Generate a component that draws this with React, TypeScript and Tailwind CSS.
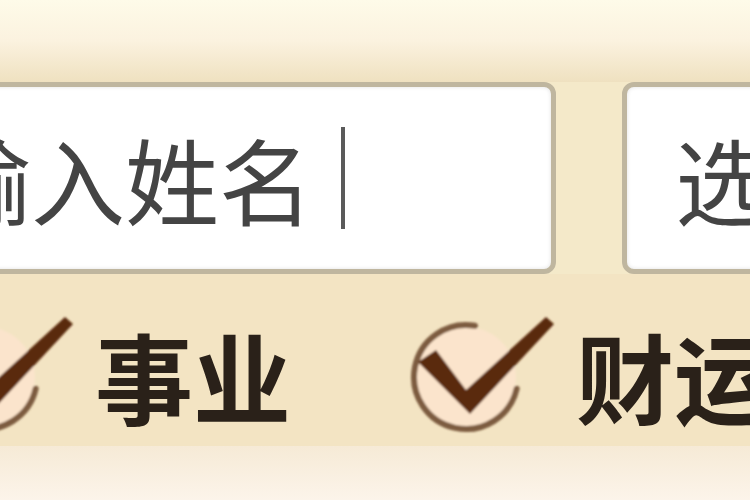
import React from "react";

const cjk = { fontFamily: '"Noto Sans CJK SC", "Noto Sans", sans-serif' };

// 圆圈对勾，右上角留缺口让勾穿出
const CheckCircle: React.FC = () => (
  <svg width="150" height="120" viewBox="0 0 150 120" className="shrink-0">
    <defs>
      <filter id="soft" x="-20%" y="-20%" width="140%" height="140%">
        <feGaussianBlur stdDeviation="1.2" />
      </filter>
    </defs>
    <g filter="url(#soft)">
      <circle cx="60" cy="63" r="50" fill="#fbe4cc" />
      <path
        d="M110.7 74.7 A52 52 0 1 1 69 11.8"
        fill="none"
        stroke="#7d5b3f"
        strokeWidth="6"
        strokeLinecap="round"
      />
      <path
        d="M12 48 L30 36 L60 76 L140 3 L148 10 L64 100 Z"
        fill="#5a2a10"
      />
    </g>
  </svg>
);

const options = ["事业", "财运"];

export default function App() {
  return (
    <div className="w-[750px] h-[500px] overflow-hidden bg-[#f3e4c3]" style={cjk}>
      {/* 顶部渐变条 */}
      <div className="h-[82px] bg-gradient-to-b from-[#fefbe9] via-[#fbf2df] to-[#efe1c0]" />

      {/* 输入框一行 */}
      <div className="flex h-[192px] bg-[#f4e9c9]">
        <div className="ml-[-190px] w-[746px] shrink-0 h-full rounded-[12px] border-[5px] border-[#bfb69f] bg-white shadow-[inset_0_0_4px_rgba(0,0,0,0.12)] flex items-center pl-[28px]">
          <span className="text-[94px] leading-none text-[#444] whitespace-nowrap">请输入姓名</span>
          <span className="ml-[28px] w-[4px] h-[102px] bg-[#5a5a5a]" />
        </div>
        <div className="ml-[66px] w-[300px] shrink-0 h-full rounded-[12px] border-[5px] border-[#bfb69f] bg-white shadow-[inset_0_0_4px_rgba(0,0,0,0.12)] flex items-center pl-[48px]">
          <span className="text-[94px] leading-none text-[#444] whitespace-nowrap">选择出生日期</span>
        </div>
      </div>

      {/* 勾选项 */}
      <div className="flex items-center h-[172px] pt-[28px] ml-[-75px]">
        {options.map((label) => (
          <div key={label} className="flex items-center shrink-0 mr-[115px]">
            <CheckCircle />
            <span className="ml-[20px] text-[98px] leading-none font-bold text-[#2a2119] whitespace-nowrap">
              {label}
            </span>
          </div>
        ))}
      </div>

      <div className="h-[54px] bg-gradient-to-b from-[#f6ead6] to-[#fcf4ea]" />
    </div>
  );
}
